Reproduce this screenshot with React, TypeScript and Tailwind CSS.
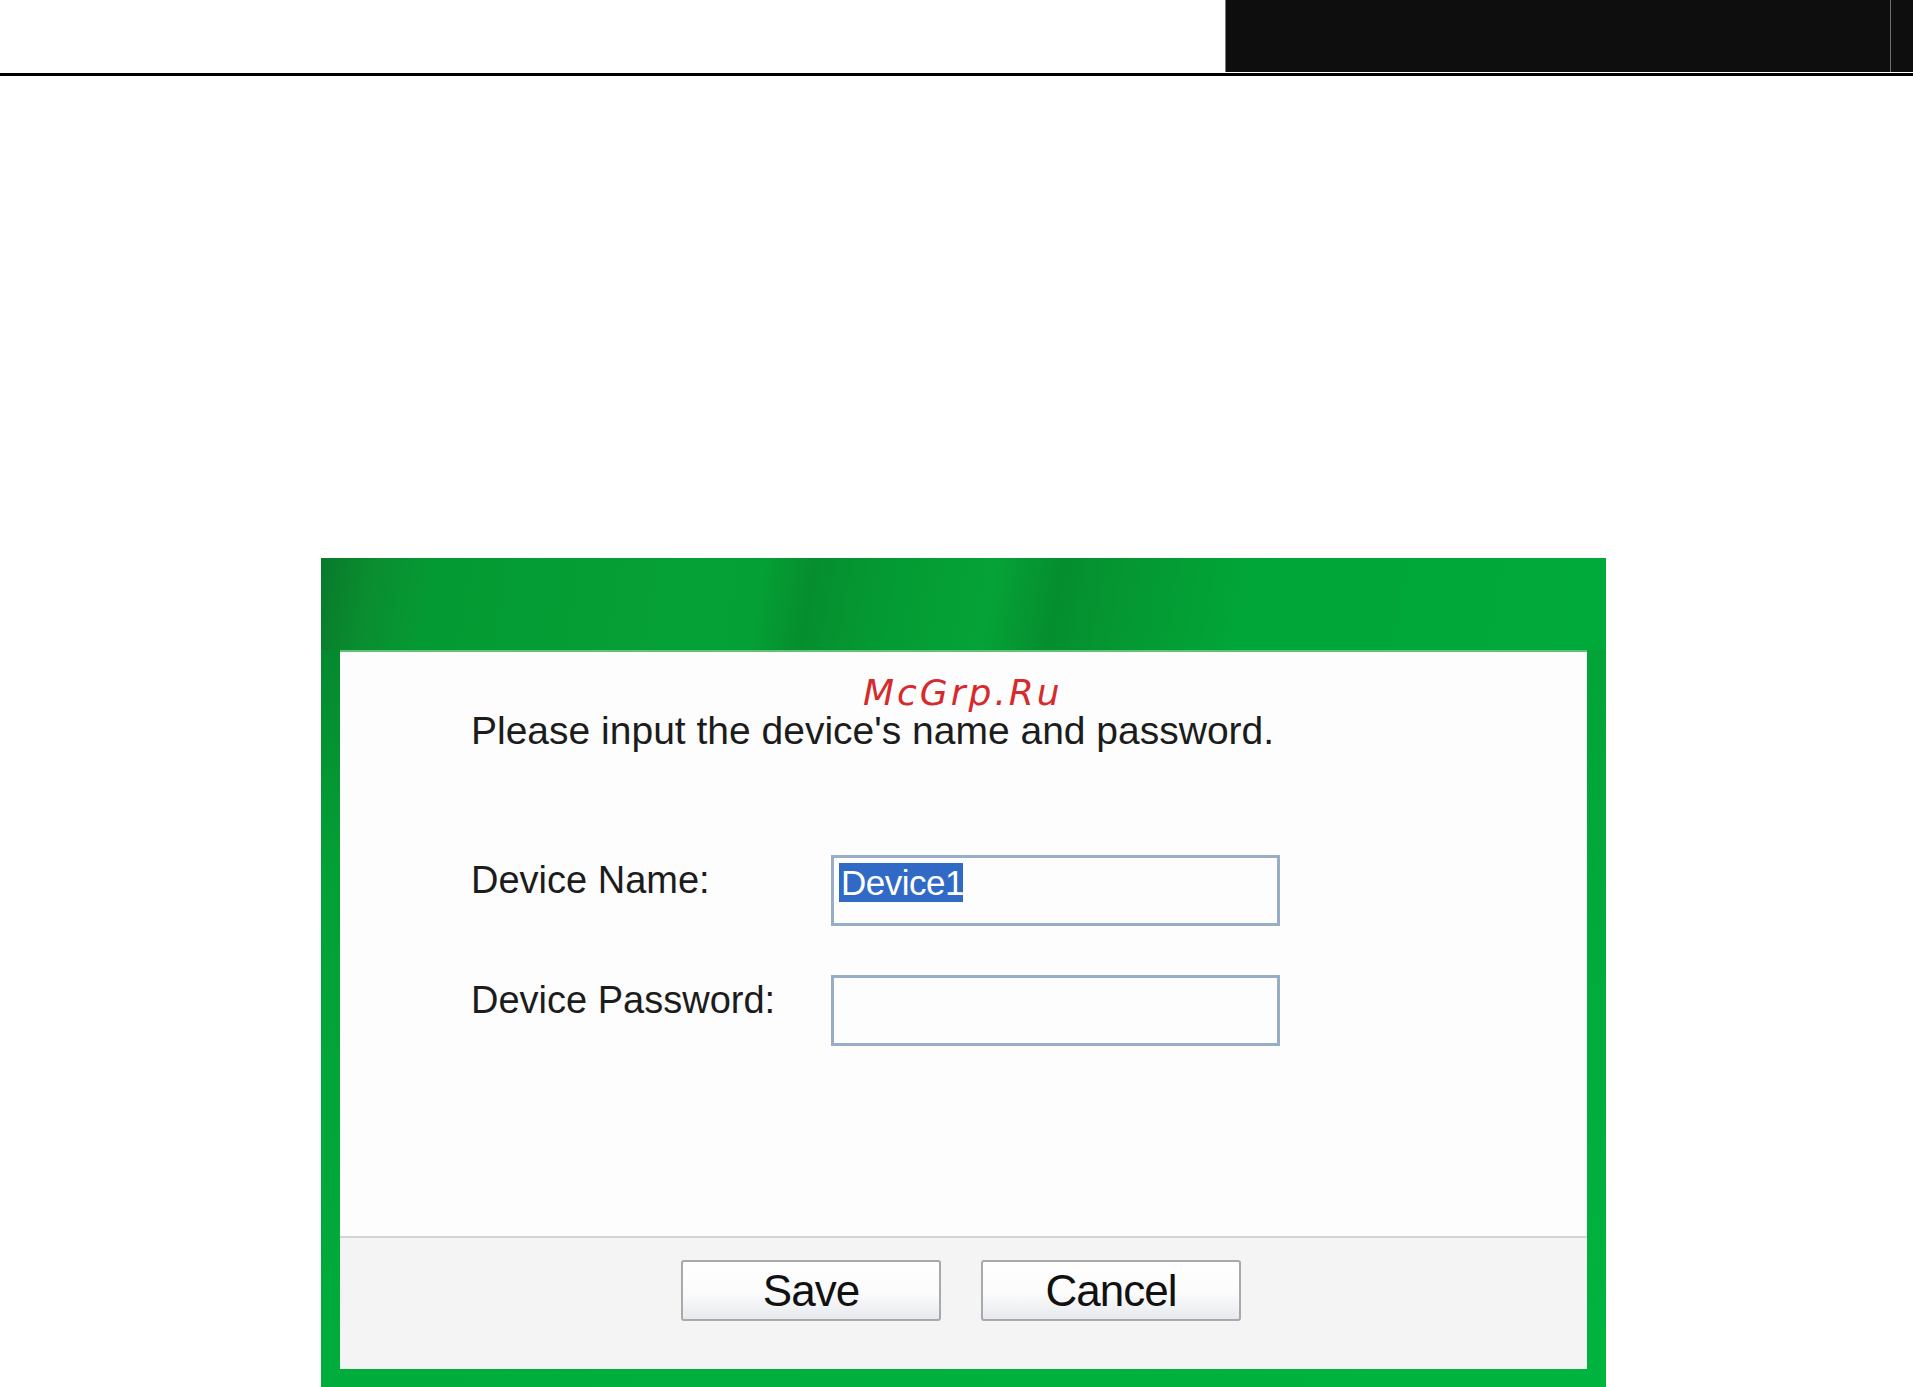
const font = { fontFamily: '"Liberation Sans", Arial, sans-serif' };

const Field = ({ label, value }: { label: string; value?: string }) => (
  <div className="flex items-start">
    <div className="w-[360px] mt-[6px] text-[38px] leading-none text-[#1c1c1c]">{label}</div>
    <div className="w-[449px] h-[71px] border-[3px] border-[#98aec6] bg-[#fdfdfd] pl-[5px] pt-[5px]">
      {value && (
        <span className="inline-block h-[39px] w-[124px] bg-[#316ac5] pl-[2px] text-[35px] leading-[39px] tracking-[-0.5px] text-white">
          {value}
        </span>
      )}
    </div>
  </div>
);

const Btn = ({ children }: { children: string }) => (
  <button className="w-[260px] h-[61px] rounded-[3px] border-2 border-[#a9a9a9] bg-[linear-gradient(180deg,#ffffff_0%,#fbfbfc_55%,#e6eaee_100%)] text-[44px] leading-none tracking-[-1px] text-[#111]">
    {children}
  </button>
);

export default function App() {
  return (
    <div className="w-[1913px] h-[1387px] overflow-hidden bg-white" style={font}>
      {/* top strip */}
      <div className="flex h-[72px]">
        <div className="flex-1" />
        <div className="w-[688px] h-[72px] bg-[#0e0e0e] border-l border-[#7a7a7a] flex justify-end pr-[22px]">
          <div className="w-px h-full bg-[#6f6f6f]" />
        </div>
      </div>
      <div className="mt-px h-[3px] bg-black" />

      {/* dialog */}
      <div className="mt-[482px] ml-[321px] w-[1285px] h-[900px] pt-[92px] px-[19px] bg-[linear-gradient(165deg,#067f2b_0%,#03a035_25%,#00ab3b_60%,#00b540_100%)] relative">
        <div className="absolute inset-x-0 top-0 h-[92px] bg-[linear-gradient(100deg,#087a2a_0%,#0a8d30_4%,#049a33_9%,#05a036_28%,#04a035_34%,#068e2e_38%,#039c34_45%,#05a237_52%,#058e2e_57%,#049a33_64%,#00a638_72%,#00aa3a_100%)]" />
        <div className="relative bg-[#fdfdfd] border-t-2 border-[#5fc27a]">
          <div className="h-[584px] pl-[131px] pt-[59px]">
            <div className="text-[39px] leading-none text-[#1c1c1c]">Please input the device's name and password.</div>
            <div className="mt-[105px] flex flex-col gap-[49px]">
              <Field label="Device Name:" value="Device1" />
              <Field label="Device Password:" />
            </div>
          </div>
          <div className="h-[133px] border-t-2 border-[#d4d4d4] bg-[#f4f4f4] pt-[22px] flex justify-center gap-[40px] pr-[5px]">
            <Btn>Save</Btn>
            <Btn>Cancel</Btn>
          </div>
          <div className="absolute left-[523px] top-[23px] text-[36px] italic tracking-[3px] leading-none text-[#d62a2c]" style={{ fontFamily: '"DejaVu Sans", sans-serif' }}>
            McGrp.Ru
          </div>
        </div>
      </div>
    </div>
  );
}
